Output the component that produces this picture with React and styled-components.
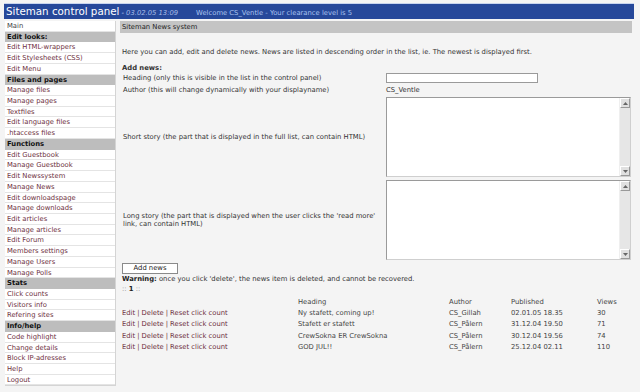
import React from "react";
import styled, { createGlobalStyle } from "styled-components";

const GlobalStyle = createGlobalStyle`
  html, body {
    margin: 0;
    padding: 0;
    background: #f4f4f4;
    font-family: "DejaVu Sans", Verdana, sans-serif;
    font-size: 6.8px;
    color: #333;
  }
`;

const menu = [
  { label: "Main" },
  { label: "Edit looks:", head: true },
  { label: "Edit HTML-wrappers" },
  { label: "Edit Stylesheets (CSS)" },
  { label: "Edit Menu" },
  { label: "Files and pages", head: true },
  { label: "Manage files" },
  { label: "Manage pages" },
  { label: "Textfiles" },
  { label: "Edit language files" },
  { label: ".htaccess files" },
  { label: "Functions", head: true },
  { label: "Edit Guestbook" },
  { label: "Manage Guestbook" },
  { label: "Edit Newssystem" },
  { label: "Manage News" },
  { label: "Edit downloadspage" },
  { label: "Manage downloads" },
  { label: "Edit articles" },
  { label: "Manage articles" },
  { label: "Edit Forum" },
  { label: "Members settings" },
  { label: "Manage Users" },
  { label: "Manage Polls" },
  { label: "Stats", head: true },
  { label: "Click counts" },
  { label: "Visitors info" },
  { label: "Refering sites" },
  { label: "Info/help", head: true },
  { label: "Code highlight" },
  { label: "Change details" },
  { label: "Block IP-adresses" },
  { label: "Help" },
  { label: "Logout" },
];

const news = [
  { heading: "Ny stafett, coming up!", author: "CS_Gillah", published: "02.01.05 18.35", views: 30 },
  { heading: "Stafett er stafett", author: "CS_Pålern", published: "31.12.04 19.50", views: 71 },
  { heading: "CrewSokna ER CrewSokna", author: "CS_Pålern", published: "30.12.04 19.56", views: 74 },
  { heading: "GOD JUL!!", author: "CS_Pålern", published: "25.12.04 02.11", views: 110 },
];

const Page = styled.div`
  padding: 3px 6px 0 4px;
`;

const TopBar = styled.div`
  height: 15px;
  background: #26489a;
  border-top: 1px solid #c8d4ee;
  display: flex;
  align-items: baseline;
  padding-left: 2px;
  white-space: nowrap;
  overflow: hidden;
`;

const Title = styled.span`
  color: #fff;
  font-size: 10.3px;
  line-height: 15px;
`;

const Stamp = styled.span`
  color: #a9bde8;
  font-style: italic;
  font-size: 6.8px;
  margin-left: 2px;
`;

const Welcome = styled.span`
  color: #a9c2f0;
  font-size: 6.8px;
  margin-left: 18px;
`;

const Body = styled.div`
  display: flex;
  gap: 4px;
  margin-top: 2px;
  align-items: flex-start;
`;

const Sidebar = styled.nav`
  width: 110px;
  flex: none;
  margin-left: 1px;
  background: #fff;
  border-right: 1px solid #d4d4d4;
  border-bottom: 1px solid #d4d4d4;
`;

const MenuItem = styled.div`
  height: 10.72px;
  box-sizing: border-box;
  line-height: 10px;
  padding-left: 2px;
  border-bottom: 1px solid ${(p) => (p.$head ? "#bdbdbd" : "#e4e4e4")};
  background: ${(p) => (p.$head ? "#bdbdbd" : "#fff")};
  color: ${(p) => (p.$head ? "#111" : p.$plain ? "#444" : "#6e3040")};
  font-weight: ${(p) => (p.$head ? "bold" : "normal")};
  white-space: nowrap;
`;

const Main = styled.main`
  flex: 1;
  min-width: 0;
`;

const SectionTitle = styled.div`
  height: 12px;
  line-height: 12px;
  background: #c4c4c4;
  padding-left: 2px;
  color: #222;
  margin-right: 2px;
`;

const Content = styled.div`
  padding-left: 2px;
`;

const Intro = styled.p`
  margin: 14px 0 0;
  line-height: 10px;
`;

const SubHead = styled.div`
  font-weight: bold;
  margin-top: 6px;
  line-height: 10px;
`;

const Form = styled.div`
  display: grid;
  grid-template-columns: 264px 1fr;
  row-gap: 3px;
  align-items: center;
  margin-right: 3px;
`;

const Label = styled.div`
  line-height: 8px;
  padding-left: 1px;
  padding-right: 6px;
`;

const TextInput = styled.input`
  width: 152px;
  height: 10px;
  box-sizing: border-box;
  border: 1px solid #9a9a9a;
  background: #fff;
  padding: 0;
  margin: 0;
  display: block;
`;

const StaticValue = styled.div`
  line-height: 8px;
`;

const AreaBox = styled.div`
  display: flex;
  height: 80px;
  box-sizing: border-box;
  border: 1px solid #9a9a9a;
  border-right-color: #cfcfcf;
  border-bottom-color: #cfcfcf;
  background: #fff;
`;

const Area = styled.textarea`
  flex: 1;
  border: none;
  outline: none;
  resize: none;
  background: #fff;
  padding: 0;
  margin: 0;
`;

const Scroll = styled.div`
  width: 10px;
  display: flex;
  flex-direction: column;
  background: #e6e6e6;
  border-left: 1px solid #efefef;
`;

const ScrollBtn = styled.div`
  height: 10px;
  box-sizing: border-box;
  background: #e0e0e0;
  border: 1px solid #fff;
  border-right-color: #999;
  border-bottom-color: #999;
  display: flex;
  align-items: center;
  justify-content: center;
`;

const Track = styled.div`
  flex: 1;
`;

const Arrow = ({ down }) => (
  <svg width="5" height="3" viewBox="0 0 5 3">
    <path d={down ? "M0 0h5L2.5 3z" : "M2.5 0L5 3H0z"} fill="#666" />
  </svg>
);

const TextBox = () => (
  <AreaBox>
    <Area />
    <Scroll>
      <ScrollBtn>
        <Arrow />
      </ScrollBtn>
      <Track />
      <ScrollBtn>
        <Arrow down />
      </ScrollBtn>
    </Scroll>
  </AreaBox>
);

const Button = styled.button`
  display: block;
  width: 56px;
  height: 11px;
  margin-top: 3px;
  padding: 0;
  font-family: inherit;
  font-size: 6.8px;
  line-height: 9px;
  color: #222;
  background: #fff;
  border: 1px solid #8a8a8a;
`;

const Warning = styled.div`
  line-height: 10px;
  b {
    color: #222;
  }
`;

const Pager = styled.div`
  line-height: 10px;
  color: #888;
  b {
    color: #222;
  }
`;

const Table = styled.table`
  border-collapse: collapse;
  margin-top: 2px;
  width: 511px;
  td,
  th {
    padding: 0;
    height: 11.3px;
    text-align: left;
    font-weight: normal;
    color: #444;
    white-space: nowrap;
  }
`;

const Link = styled.a`
  color: #6e3040;
  text-decoration: none;
`;

const Sep = styled.span`
  color: #6e3040;
  margin: 0 2px;
`;

export default function App() {
  return (
    <>
      <GlobalStyle />
      <Page>
        <TopBar>
          <Title>Siteman control panel</Title>
          <Stamp>- 03.02.05 13:09</Stamp>
          <Welcome>Welcome CS_Ventle - Your clearance level is 5</Welcome>
        </TopBar>
        <Body>
          <Sidebar>
            {menu.map((m, i) => (
              <MenuItem key={i} $head={m.head} $plain={i === 0}>
                {m.label}
              </MenuItem>
            ))}
          </Sidebar>
          <Main>
            <SectionTitle>Siteman News system</SectionTitle>
            <Content>
              <Intro>
                Here you can add, edit and delete news. News are listed in descending order in the list, ie. The
                newest is displayed first.
              </Intro>
              <SubHead>Add news:</SubHead>
              <Form>
                <Label>Heading (only this is visible in the list in the control panel)</Label>
                <TextInput type="text" />
                <Label>Author (this will change dynamically with your displayname)</Label>
                <StaticValue>CS_Ventle</StaticValue>
                <Label>Short story (the part that is displayed in the full list, can contain HTML)</Label>
                <TextBox />
                <Label>Long story (the part that is displayed when the user clicks the 'read more' link, can contain HTML)</Label>
                <TextBox />
              </Form>
              <Button>Add news</Button>
              <Warning>
                <b>Warning:</b> once you click 'delete', the news item is deleted, and cannot be recovered.
              </Warning>
              <Pager>
                :: <b>1</b> ::
              </Pager>
              <Table>
                <colgroup>
                  <col style={{ width: 176 }} />
                  <col style={{ width: 151 }} />
                  <col style={{ width: 62 }} />
                  <col style={{ width: 86 }} />
                  <col />
                </colgroup>
                <thead>
                  <tr>
                    <th></th>
                    <th>Heading</th>
                    <th>Author</th>
                    <th>Published</th>
                    <th>Views</th>
                  </tr>
                </thead>
                <tbody>
                  {news.map((n, i) => (
                    <tr key={i}>
                      <td>
                        <Link href="#">Edit</Link>
                        <Sep>|</Sep>
                        <Link href="#">Delete</Link>
                        <Sep>|</Sep>
                        <Link href="#">Reset click count</Link>
                      </td>
                      <td>{n.heading}</td>
                      <td>{n.author}</td>
                      <td>{n.published}</td>
                      <td>{n.views}</td>
                    </tr>
                  ))}
                </tbody>
              </Table>
            </Content>
          </Main>
        </Body>
      </Page>
    </>
  );
}
